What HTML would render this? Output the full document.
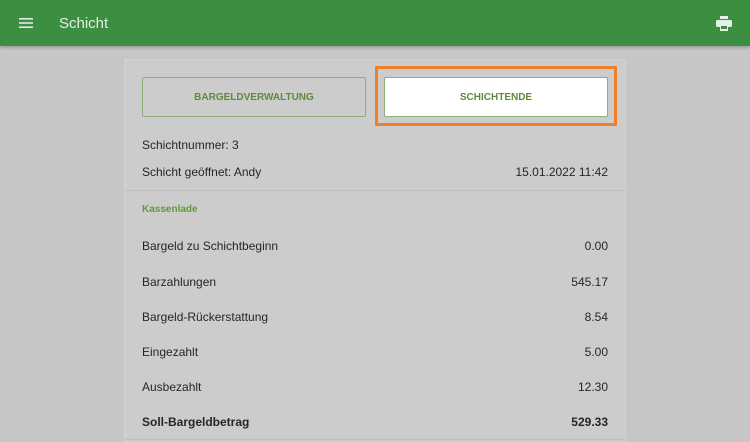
<!DOCTYPE html>
<html style="overflow:hidden;width:750px;height:442px"><head><style>
*{margin:0;padding:0;box-sizing:border-box}
body{width:750px;height:442px;overflow:hidden;background:#c6c6c6;font-family:"Liberation Sans",sans-serif;position:relative}
.hdr{position:absolute;left:0;top:0;width:750px;height:46px;background:#3c8e40;box-shadow:0 2px 3px rgba(0,0,0,.2)}
.hdr .t{position:absolute;left:59px;top:15px;font-size:15px;color:#e6efe6}
.card{position:absolute;left:124px;top:59px;width:502px;height:383px;background:#cccccc;border:1px solid #d4d4d4;border-bottom:none;border-radius:2px}
.btn{position:absolute;top:77px;width:224px;height:40px;border:1px solid #8fae7c;border-radius:2px;font-size:10px;font-weight:bold;color:#5f8a3c;display:flex;align-items:center;justify-content:center;letter-spacing:0}
.hl{position:absolute;left:375px;top:66px;width:242px;height:60px;border:3px solid #f07f2a}
.r{position:absolute;left:142px;width:466px;font-size:12px;color:#262626;display:flex;justify-content:space-between}
.hr{position:absolute;left:125px;width:500px;height:1px;background:#bdbdbd}
</style></head><body>
<div class="hdr">
<svg style="position:absolute;left:19px;top:17px" width="14" height="12"><rect y="1" width="14" height="1.6" fill="#dfe9df"/><rect y="5.2" width="14" height="1.6" fill="#dfe9df"/><rect y="9.4" width="14" height="1.6" fill="#dfe9df"/></svg>
<div class="t">Schicht</div>
<svg style="position:absolute;left:716px;top:16px" width="16" height="15" viewBox="0 0 16 15"><rect x="4" y="0" width="8" height="3" fill="#e6efe6"/><rect x="0" y="4" width="16" height="7" rx="1.5" fill="#e6efe6"/><rect x="4" y="9" width="8" height="6" fill="#e6efe6"/><rect x="5" y="10" width="6" height="3" fill="#3c8e40"/></svg>
</div>
<div class="card"></div>
<div class="btn" style="left:142px">BARGELDVERWALTUNG</div>
<div class="btn" style="left:384px;background:#fff">SCHICHTENDE</div>
<div class="hl"></div>
<div class="r" style="top:138px">Schichtnummer: 3</div>
<div class="r" style="top:165px"><span>Schicht geöffnet: Andy</span><span>15.01.2022 11:42</span></div>
<div class="hr" style="top:190px"></div>
<div class="r" style="top:204px;font-size:10px;font-weight:bold;color:#5f9a3c">Kassenlade</div>
<div class="r" style="top:239px"><span>Bargeld zu Schichtbeginn</span><span>0.00</span></div>
<div class="r" style="top:275px"><span>Barzahlungen</span><span>545.17</span></div>
<div class="r" style="top:310px"><span>Bargeld-Rückerstattung</span><span>8.54</span></div>
<div class="r" style="top:345px"><span>Eingezahlt</span><span>5.00</span></div>
<div class="r" style="top:380px"><span>Ausbezahlt</span><span>12.30</span></div>
<div class="r" style="top:415px;font-weight:bold"><span>Soll-Bargeldbetrag</span><span>529.33</span></div>
<div class="hr" style="top:439px"></div>
</body></html>
